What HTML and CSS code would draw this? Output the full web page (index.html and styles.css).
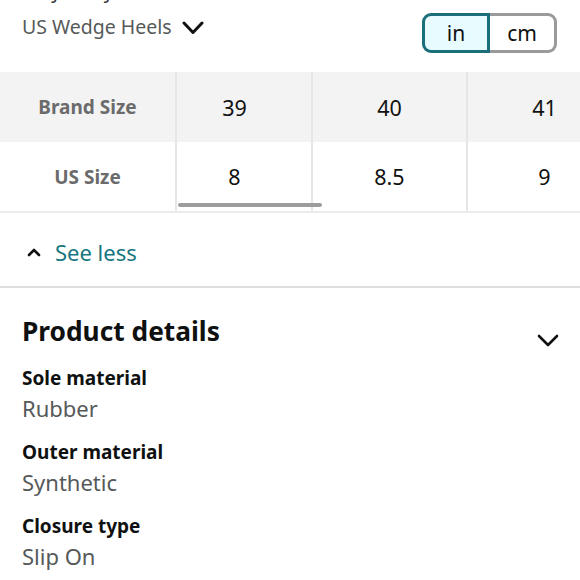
FILE: index.html
```html
<!DOCTYPE html>
<html lang="en">
<head>
<meta charset="utf-8">
<title>Size chart</title>
<link rel="stylesheet" href="styles.css">
</head>
<body>
<div class="page">
  <header class="header">
    <div class="header-left">
      <div class="crumb">Katy Perry Size Chart</div>
      <div class="subtitle">
        <span>US Wedge Heels</span>
        <svg class="chev-sub" width="22" height="14" viewBox="0 0 22 14"><polyline points="2,2 11,11.5 20,2" fill="none" stroke="#111" stroke-width="3" stroke-linecap="round" stroke-linejoin="round"/></svg>
      </div>
    </div>
    <div class="toggle">
      <div class="seg seg-on">in</div>
      <div class="seg seg-off">cm</div>
    </div>
  </header>

  <div class="size-table">
    <div class="label-col">
      <div class="cell row1 label">Brand Size</div>
      <div class="cell row2 label">US Size</div>
    </div>
    <div class="scroller">
      <div class="track">
        <div class="col">
          <div class="cell row1 num">39</div>
          <div class="cell row2 num">8</div>
        </div>
        <div class="col">
          <div class="cell row1 num">40</div>
          <div class="cell row2 num">8.5</div>
        </div>
        <div class="col">
          <div class="cell row1 num">41</div>
          <div class="cell row2 num">9</div>
        </div>
      </div>
    </div>
    <div class="scroll-thumb"></div>
  </div>

  <div class="see-less">
    <svg class="caret-up" width="14" height="9" viewBox="0 0 14 9"><polyline points="2,7 7,2 12,7" fill="none" stroke="#111" stroke-width="2.6" stroke-linecap="round" stroke-linejoin="round"/></svg>
    <span class="link">See less</span>
  </div>

  <section class="details">
    <div class="details-head">
      <h2 class="details-title">Product details</h2>
      <svg class="chev-details" width="22" height="13" viewBox="0 0 22 13"><polyline points="2,2 11,11 20,2" fill="none" stroke="#111" stroke-width="2.6" stroke-linecap="round" stroke-linejoin="round"/></svg>
    </div>
    <div class="detail">
      <div class="detail-label">Sole material</div>
      <div class="detail-value">Rubber</div>
    </div>
    <div class="detail">
      <div class="detail-label">Outer material</div>
      <div class="detail-value">Synthetic</div>
    </div>
    <div class="detail">
      <div class="detail-label">Closure type</div>
      <div class="detail-value">Slip On</div>
    </div>
  </section>
</div>
</body>
</html>
```

FILE: styles.css
```css
* { box-sizing: border-box; }
html, body { margin: 0; padding: 0; background: #fff; }
body {
  font-family: "Noto Sans", "Open Sans", sans-serif;
  color: #0f1111;
  width: 580px;
  height: 580px;
  overflow: hidden;
}
.page { width: 580px; }

.header {
  display: flex;
  justify-content: space-between;
  align-items: flex-start;
  height: 72px;
  padding: 0 23px 0 22px;
}
.crumb {
  font-size: 19px;
  line-height: 24px;
  margin-top: -21px;
  color: #333;
}
.subtitle {
  display: flex;
  align-items: center;
  gap: 10px;
  margin-top: 12px;
  font-size: 19.5px;
  line-height: 24px;
  color: #565959;
}
.chev-sub { margin-top: 1px; }

.toggle {
  display: flex;
  margin-top: 13px;
  height: 40px;
}
.seg {
  display: flex;
  align-items: center;
  justify-content: center;
  font-size: 21px;
  color: #0f1111;
  height: 40px;
}
.seg-on {
  width: 68px;
  background: #e8fbfe;
  border: 3px solid #1b6f7b;
  border-radius: 9px 0 0 9px;
}
.seg-off {
  width: 67px;
  background: #fff;
  border: 3px solid #9a9a9a;
  border-left: none;
  border-radius: 0 9px 9px 0;
}

.size-table {
  position: relative;
  display: flex;
  border-bottom: 2px solid #ececec;
}
.label-col {
  width: 177px;
  flex: none;
  border-right: 2px solid #e6e6e6;
}
.scroller {
  flex: 1;
  overflow: hidden;
}
.track {
  display: flex;
  margin-left: -19px;
}
.col {
  width: 155px;
  flex: none;
  border-right: 2px solid #e6e6e6;
}
.cell {
  display: flex;
  align-items: center;
  justify-content: center;
}
.row1 { height: 70px; background: #f3f3f3; }
.row2 { height: 69px; background: #fff; }
.label {
  font-size: 19px;
  font-weight: 700;
  color: #6b6b6b;
}
.num {
  font-size: 21.5px;
  color: #111;
}
.scroll-thumb {
  position: absolute;
  left: 178px;
  top: 131px;
  width: 144px;
  height: 4px;
  border-radius: 2px;
  background: #9c9c9c;
}

.see-less {
  display: flex;
  align-items: flex-start;
  gap: 14px;
  padding: 24px 0 19px 27px;
  border-bottom: 2px solid #dedede;
}
.caret-up { margin-top: 11px; }
.link {
  font-size: 22px;
  line-height: 30px;
  color: #17767e;
}

.details {
  padding: 26px 21px 0 22px;
}
.details-head {
  display: flex;
  justify-content: space-between;
  align-items: flex-start;
}
.details-title {
  margin: 0;
  font-size: 26.3px;
  line-height: 34px;
  font-weight: 700;
  color: #0f1111;
}
.chev-details { margin-top: 20px; }
.detail { margin-top: 15px; }
.detail + .detail { margin-top: 14px; }
.detail-label {
  font-size: 19px;
  line-height: 30px;
  font-weight: 700;
  color: #0f1111;
}
.detail-value {
  font-size: 22px;
  line-height: 30px;
  color: #565959;
}
```
